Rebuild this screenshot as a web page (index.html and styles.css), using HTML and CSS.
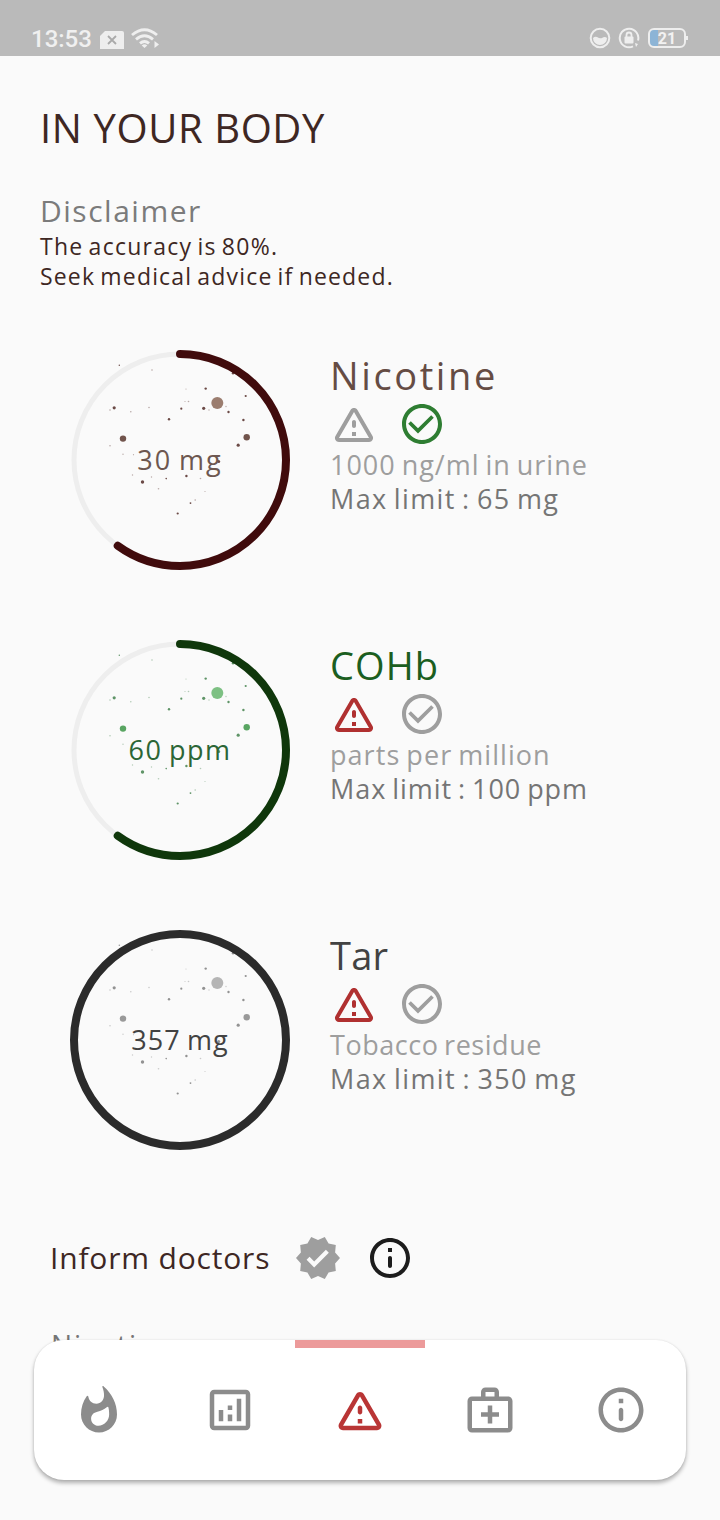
FILE: index.html
```
<!DOCTYPE html>
<html lang="en">
<head>
<meta charset="utf-8">
<title>In your body</title>
<link rel="stylesheet" href="styles.css">
</head>
<body>
<svg class="defs" aria-hidden="true">
  <symbol id="warning" viewBox="0 0 24 24"><path d="M12 5.99L19.53 19H4.47L12 5.99M2.74 18c-.77 1.33.19 3 1.73 3h15.06c1.54 0 2.5-1.67 1.73-3L13.73 4.99c-.77-1.33-2.69-1.33-3.46 0L2.74 18zM11 11v2c0 .55.45 1 1 1s1-.45 1-1v-2c0-.55-.45-1-1-1s-1 .45-1 1zm0 5h2v2h-2z"/></symbol>
  <symbol id="check" viewBox="0 0 24 24"><path d="M12 2C6.48 2 2 6.48 2 12s4.48 10 10 10 10-4.48 10-10S17.52 2 12 2zm0 18c-4.41 0-8-3.59-8-8s3.59-8 8-8 8 3.59 8 8-3.59 8-8 8z"/><path d="M16.59 7.58L10 14.170l-3.590-3.580L5.100 11.900l4.900 4.900 7.900-7.900z"/></symbol>
  <symbol id="info" viewBox="0 0 24 24"><path d="M12 2C6.48 2 2 6.48 2 12s4.48 10 10 10 10-4.48 10-10S17.52 2 12 2zm0 18c-4.41 0-8-3.59-8-8s3.59-8 8-8 8 3.59 8 8-3.59 8-8 8zM11 7h2v2h-2zM12 11c.55 0 1 .45 1 1v4c0 .55-.45 1-1 1s-1-.45-1-1v-4c0-.55.45-1 1-1z"/></symbol>
  <symbol id="verified" viewBox="0 0 24 24"><path d="M23 12l-2.44-2.79.34-3.69-3.61-.82-1.89-3.2L12 2.96 8.6 1.5 6.71 4.69 3.1 5.5l.34 3.7L1 12l2.44 2.79-.34 3.7 3.61.82L8.6 22.5l3.4-1.47 3.4 1.46 1.89-3.19 3.61-.82-.34-3.69L23 12zm-12.91 4.72l-3.8-3.81 1.48-1.48 2.32 2.33 5.85-5.87 1.48 1.48-7.33 7.35z"/></symbol>
  <symbol id="flame" viewBox="0 0 24 24"><path d="M14.100 1.500c-.3-.3-.7-.1-.6.3.5 1.300.74 2.500.74 3.670 0 2.060-1.350 3.730-3.410 3.730-1.900 0-3.300-1.300-3.550-3.100-.1-.5-.5-.6-.75-.2C4.900 8.100 4 11 4 14c0 4.420 3.580 8 8 8s8-3.580 8-8c0-4.900-2.200-9.300-5.900-12.500zM11.710 19c-1.780 0-3.220-1.400-3.220-3.140 0-1.620 1.050-2.760 2.810-3.120 1.500-.3 3-.9 4.120-1.950.4-.4.75-.3.8.25.2.85.29 1.750.29 2.960 0 2.650-2.150 5-4.800 5z"/></symbol>
  <symbol id="analytics" viewBox="0 0 24 24"><path d="M19 3H5c-1.100 0-2 .9-2 2v14c0 1.100.9 2 2 2h14c1.100 0 2-.9 2-2V5c0-1.100-.9-2-2-2zm0 16H5V5h14v14zM7 12h2v5H7zM15 7h2v10h-2zM11 14h2v3h-2zM11 10h2v2h-2z"/></symbol>
  <symbol id="medical" viewBox="0 0 24 24"><path d="M20 6h-4V4c0-1.100-.9-2-2-2h-4c-1.100 0-2 .9-2 2v2H4c-1.100 0-2 .9-2 2v12c0 1.100.9 2 2 2h16c1.100 0 2-.9 2-2V8c0-1.100-.9-2-2-2zM10 4h4v2h-4V4zm10 16H4V8h16v12zM13 10h-2v3H8v2h3v3h2v-3h3v-2h-3z"/></symbol>
  <symbol id="particles" viewBox="0 0 220 220">
    <circle class="dot-large" cx="147.300" cy="53" r="6"/>
    <g class="dot-medium"><circle cx="53" cy="88.600" r="3.200"/><circle cx="176.700" cy="87.200" r="3.200"/></g>
    <g class="dot-small">
      <circle cx="44.200" cy="57.800" r="1.600"/><circle cx="133.700" cy="58.300" r="1.600"/><circle cx="168.200" cy="95.200" r="1.600"/><circle cx="72.500" cy="132" r="1.700"/>
      <circle cx="135.700" cy="38.600" r="1.200"/><circle cx="175.700" cy="46" r="1.100"/><circle cx="158.500" cy="62" r="1.200"/><circle cx="173.400" cy="70" r="1.200"/>
      <circle cx="99" cy="69.200" r="1.200"/><circle cx="111.300" cy="58.700" r="1.100"/><circle cx="116.400" cy="126" r="1.200"/><circle cx="107.700" cy="163.500" r="1.100"/>
      <circle cx="120.500" cy="153.100" r=".9"/><circle cx="96.200" cy="128.600" r=".8"/><circle cx="49.300" cy="15.300" r=".7"/><circle cx="148.700" cy="111.500" r="1.500"/><circle cx="163" cy="23.200" r="1.200"/>
    </g>
    <g class="dot-faint">
      <circle cx="82" cy="20" r=".8"/><circle cx="79" cy="57.500" r=".8"/><circle cx="118.500" cy="51.500" r=".8"/><circle cx="115" cy="51.500" r=".6"/><circle cx="60.800" cy="61.800" r=".8"/>
      <circle cx="40" cy="60" r=".8"/><circle cx="40" cy="95.700" r=".8"/><circle cx="53" cy="104.300" r=".7"/><circle cx="63.500" cy="104.700" r=".6"/><circle cx="62.500" cy="125" r=".7"/>
      <circle cx="81.500" cy="127" r=".7"/><circle cx="130.500" cy="128.500" r=".8"/><circle cx="88.500" cy="138.800" r=".8"/><circle cx="125.200" cy="150" r=".8"/><circle cx="135" cy="141.500" r=".6"/>
      <circle cx="139" cy="60" r=".7"/><circle cx="156" cy="56.500" r=".7"/><circle cx="116" cy="39" r=".6"/>
    </g>
  </symbol>
</svg>

<header class="status-bar">
  <span class="time">13:53</span>
  <svg class="sim" width="24" height="18" viewBox="0 0 24 18"><path d="M5 0H22a2 2 0 0 1 2 2V18H0V5z" fill="#eee"/><path d="M8 5l8 8M16 5l-8 8" stroke="#aaa" stroke-width="1.800"/></svg>
  <svg class="wifi" width="29" height="21" viewBox="0 0 29 21"><g fill="none" stroke="#efefef" stroke-width="2.900"><path d="M1 7Q13.500-3.500 26 7M5 11.300Q13.500 4 22 11.300M9 15.300Q13.500 11.500 18 15.300"/></g><path d="M10.700 17.500Q13.500 15.200 16.300 17.500L13.500 20zM23.500 13l4.500 3.500-4.500 3.500z" fill="#efefef"/></svg>
  <div class="status-right">
    <svg width="22" height="22" viewBox="0 0 22 22"><circle cx="11" cy="11" r="9.300" fill="none" stroke="#eee" stroke-width="2"/><path d="M4 11q2-2 4-1 3 2 5 1 3-2 5 0a7 7 0 0 1-14 0z" fill="#eee"/></svg>
    <svg width="22" height="22" viewBox="0 0 22 22"><path d="M15 19.400A9.300 9.300 0 1 1 20 13.500" fill="none" stroke="#eee" stroke-width="2"/><path d="M17 16l3 1-2 3z" fill="#eee"/><rect x="6.500" y="9.500" width="9" height="7" rx="1" fill="#eee"/><path d="M8.500 10V8a2.500 2.500 0 0 1 5 0v2" fill="none" stroke="#eee" stroke-width="1.800"/></svg>
    <div class="battery"><span>21</span></div>
  </div>
</header>

<main class="page">
  <h1 class="title">IN YOUR BODY</h1>
  <section class="disclaimer">
    <h2 class="disclaimer-title">Disclaimer</h2>
    <p class="disclaimer-text accuracy">The accuracy is 80%.</p>
    <p class="disclaimer-text">Seek medical advice if needed.</p>
  </section>

  <section class="meters">
    <article class="meter nicotine">
      <div class="gauge">
        <svg class="ring" viewBox="0 0 220 220"><circle class="track" cx="110" cy="110" r="106"/><use href="#particles"/><circle class="progress" cx="110" cy="110" r="106" pathLength="100" stroke-dasharray="60 100" transform="rotate(-90 110 110)"/></svg>
        <span class="value">30 mg</span>
      </div>
      <div class="details">
        <h3 class="name">Nicotine</h3>
        <div class="flags"><svg class="icon"><use href="#warning"/></svg><svg class="icon ok"><use href="#check"/></svg></div>
        <p class="unit">1000 ng/ml in urine</p>
        <p class="limit">Max limit : 65 mg</p>
      </div>
    </article>
    <article class="meter cohb">
      <div class="gauge">
        <svg class="ring" viewBox="0 0 220 220"><circle class="track" cx="110" cy="110" r="106"/><use href="#particles"/><circle class="progress" cx="110" cy="110" r="106" pathLength="100" stroke-dasharray="60 100" transform="rotate(-90 110 110)"/></svg>
        <span class="value">60 ppm</span>
      </div>
      <div class="details">
        <h3 class="name">COHb</h3>
        <div class="flags"><svg class="icon alert"><use href="#warning"/></svg><svg class="icon"><use href="#check"/></svg></div>
        <p class="unit">parts per million</p>
        <p class="limit">Max limit : 100 ppm</p>
      </div>
    </article>
    <article class="meter tar">
      <div class="gauge">
        <svg class="ring" viewBox="0 0 220 220"><use href="#particles"/><circle class="progress" cx="110" cy="110" r="106"/></svg>
        <span class="value">357 mg</span>
      </div>
      <div class="details">
        <h3 class="name">Tar</h3>
        <div class="flags"><svg class="icon alert"><use href="#warning"/></svg><svg class="icon"><use href="#check"/></svg></div>
        <p class="unit">Tobacco residue</p>
        <p class="limit">Max limit : 350 mg</p>
      </div>
    </article>
  </section>

  <section class="inform">
    <h2 class="inform-title">Inform doctors</h2>
    <svg class="icon"><use href="#verified"/></svg>
    <svg class="icon dark"><use href="#info"/></svg>
  </section>
  <p class="next-item">Nicotine</p>
</main>

<nav class="nav">
  <a class="tab"><svg class="nav-icon"><use href="#flame"/></svg></a>
  <a class="tab"><svg class="nav-icon"><use href="#analytics"/></svg></a>
  <a class="tab active"><svg class="nav-icon"><use href="#warning"/></svg></a>
  <a class="tab"><svg class="nav-icon"><use href="#medical"/></svg></a>
  <a class="tab"><svg class="nav-icon"><use href="#info"/></svg></a>
</nav>
</body>
</html>
```
FILE: styles.css
```
* { box-sizing: border-box; margin: 0; padding: 0; }
body { position: relative; width: 720px; height: 1520px; overflow: hidden; background: #fafafa; color: #3e2723; font-family: "Open Sans", sans-serif; }
h1, h2, h3 { font-weight: 400; }
p, h1, h2, h3, span { white-space: nowrap; }
svg { display: block; flex: none; }
.defs { position: absolute; width: 0; height: 0; }

.status-bar { display: flex; align-items: center; height: 56px; padding: 20px 33px 0 31px; background: #bababa; }
.time { width: 69px; font: 500 24px/30px Roboto, sans-serif; color: #f0f0f0; padding-top: 2px; }
.sim { margin-top: 3px; }
.wifi { margin: 0 0 0 7px; }
.status-right { display: flex; align-items: center; gap: 7px; margin-left: auto; }
.battery { position: relative; width: 38px; height: 20px; margin: 0 1px 0 1px; border: 2px solid #eee; border-radius: 6px; background: linear-gradient(90deg, #8cb4d6 8px, transparent 8px); font: 700 16px/17px Roboto, sans-serif; color: #f2f2f2; text-align: center; }
.battery::after { content: ""; position: absolute; right: -4px; top: 6px; width: 2px; height: 4px; background: #eee; }

.page { padding: 45px 40px 0; }
.title { font-size: 40px; line-height: 53px; letter-spacing: .6px; }
.disclaimer { margin-top: 37px; }
.disclaimer-title { font-size: 30px; line-height: 39px; letter-spacing: 1.51px; color: #7b7b7b; margin-bottom: 1px; }
.disclaimer-text { font-size: 23px; line-height: 30px; letter-spacing: 1.17px; word-spacing: -2px; }
.accuracy { letter-spacing: 1.24px; }

.meters { display: grid; gap: 70px; margin: 59px 0 0 30px; }
.meter { display: flex; gap: 40px; height: 220px; }
.gauge { display: grid; place-items: center; width: 220px; height: 220px; }
.gauge > * { grid-area: 1 / 1; }
.ring { width: 220px; height: 220px; }
.track { fill: none; stroke: #eee; stroke-width: 5; }
.progress { fill: none; stroke: var(--ring); stroke-width: 8; stroke-linecap: round; }
.dot-large { fill: var(--dot-large); }
.dot-medium { fill: var(--dot-medium); }
.dot-small { fill: var(--dot-small); }
.dot-faint { fill: var(--dot-small); opacity: .45; }
.value { font-size: 27px; line-height: 36px; color: var(--value); word-spacing: -2px; }
.name { font-size: 38px; line-height: 50px; color: var(--name); }
.flags { display: flex; gap: 20px; }
.icon { width: 48px; height: 48px; fill: #9e9e9e; }
.icon.ok { fill: #2e7d32; }
.icon.alert { fill: #b03030; }
.icon.dark { fill: #1c1c1c; }
.unit, .limit { font-size: 27px; line-height: 34px; word-spacing: -2px; }
.unit { color: #9e9e9e; }
.limit { color: #757575; }

.nicotine { --ring: #400b0c; --name: #654c44; --value: #6d5750; --dot-large: #9b7d6f; --dot-medium: #71544c; --dot-small: #6b4a46; }
.nicotine .name { letter-spacing: 2.6px; }
.nicotine .unit { letter-spacing: .98px; }
.nicotine .limit { letter-spacing: 1.36px; }
.nicotine .value { letter-spacing: 2px; }
.cohb { --ring: #0f370b; --name: #1b5e20; --value: #2b6636; --dot-large: #7dc083; --dot-medium: #59a562; --dot-small: #5f9467; }
.cohb .name { letter-spacing: 1.1px; }
.cohb .unit { letter-spacing: 1.05px; }
.cohb .limit { letter-spacing: .95px; }
.cohb .value { letter-spacing: 1.5px; }
.tar { --ring: #2b2b2b; --name: #424242; --value: #424242; --dot-large: #b5b5b5; --dot-medium: #999; --dot-small: #929292; }
.tar .name { letter-spacing: .27px; }
.tar .unit { letter-spacing: .54px; }
.tar .limit { letter-spacing: 1.4px; }
.tar .value { letter-spacing: 1.1px; }

.inform { display: flex; align-items: center; gap: 24px; height: 48px; margin: 84px 0 0 10px; }
.inform-title { width: 220px; font-size: 30px; line-height: 40px; letter-spacing: .82px; }
.next-item { margin: 42px 0 0 11px; font-size: 28px; line-height: 40px; letter-spacing: 1.91px; color: #757575; }

.nav { position: absolute; left: 34px; top: 1340px; display: flex; width: 652px; height: 140px; background: #fff; border-radius: 30px; box-shadow: 0 3px 4px rgba(0, 0, 0, .3), 0 0 2px rgba(0, 0, 0, .1); }
.tab { display: grid; place-items: center; flex: 1; }
.nav-icon { width: 54px; height: 54px; fill: #8c8c8c; }
.active { background: linear-gradient(#ec9a9a 8px, transparent 8px); }
.active .nav-icon { fill: #b93535; }
```
